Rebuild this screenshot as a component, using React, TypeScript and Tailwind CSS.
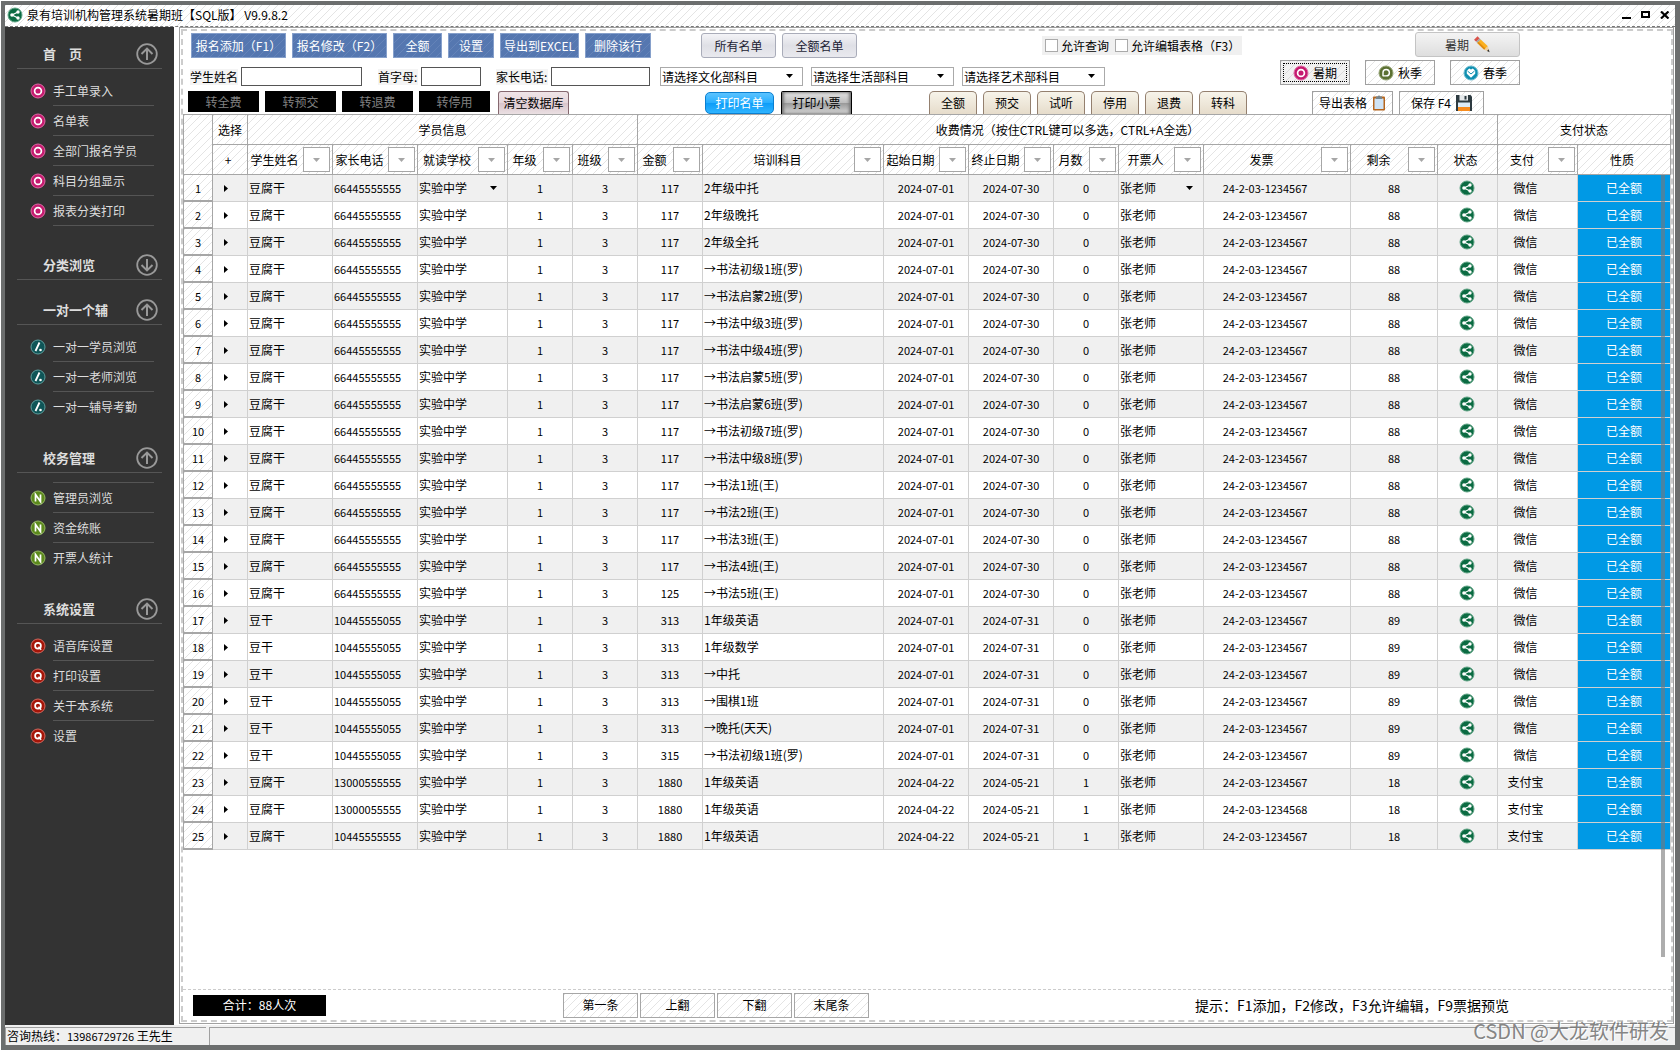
import React from 'react';

interface MenuSection {
    title: string;
    open: boolean;
    icon?: 'ring' | 'slash' | 'n' | 'q';
    spacing: string;
    listClass: string;
    items: string[];
}

interface Column {
    key: string;
    title: string;
    width: string;
    filter: boolean;
}

interface Student {
    name: string;
    phone: string;
    amount: number;
    subject: string;
    start: string;
    end: string;
    months: number;
    invoice: string;
    rest: number;
    pay: string;
}

const hatch = 'bg-[linear-gradient(135deg,#e4e4e4_9%,#fff_9%,#fff_50%,#e4e4e4_50%,#e4e4e4_59%,#fff_59%)] bg-[length:8px_8px]';
const darkHatch = 'bg-[linear-gradient(135deg,#dcdcdc_9%,#f2f2f2_9%,#f2f2f2_50%,#dcdcdc_50%,#dcdcdc_59%,#f2f2f2_59%)] bg-[length:8px_8px]';

const sections: MenuSection[] = [
    { title: '首　页', open: true, icon: 'ring', spacing: 'mt-[13px]', listClass: 'pt-[7px]', items: ['手工单录入', '名单表', '全部门报名学员', '科目分组显示', '报表分类打印'] },
    { title: '分类浏览', open: false, spacing: 'mt-[25px]', listClass: '', items: [] },
    { title: '一对一个辅', open: true, icon: 'slash', spacing: 'mt-[16px]', listClass: 'pt-[7px] [&>li:last-child]:border-transparent', items: ['一对一学员浏览', '一对一老师浏览', '一对一辅导考勤'] },
    { title: '校务管理', open: true, icon: 'n', spacing: 'mt-[22px]', listClass: 'mt-[9px] before:block before:h-px before:ml-[48px] before:mr-[20px] before:bg-[#555] [&>li:last-child]:border-transparent', items: ['管理员浏览', '资金统账', '开票人统计'] },
    { title: '系统设置', open: true, icon: 'q', spacing: 'mt-[22px]', listClass: 'pt-[7px] [&>li:last-child]:border-transparent', items: ['语音库设置', '打印设置', '关于本系统', '设置'] },
];

const columns: Column[] = [
    { key: 'mark', title: '+', width: 'w-[35px]', filter: false },
    { key: 'name', title: '学生姓名', width: 'w-[85px]', filter: true },
    { key: 'phone', title: '家长电话', width: 'w-[85px]', filter: true },
    { key: 'school', title: '就读学校', width: 'w-[90px]', filter: true },
    { key: 'grade', title: '年级', width: 'w-[65px]', filter: true },
    { key: 'class', title: '班级', width: 'w-[65px]', filter: true },
    { key: 'amount', title: '金额', width: 'w-[65px]', filter: true },
    { key: 'subject', title: '培训科目', width: 'w-[181px]', filter: true },
    { key: 'start', title: '起始日期', width: 'w-[85px]', filter: true },
    { key: 'end', title: '终止日期', width: 'w-[85px]', filter: true },
    { key: 'months', title: '月数', width: 'w-[65px]', filter: true },
    { key: 'issuer', title: '开票人', width: 'w-[85px]', filter: true },
    { key: 'invoice', title: '发票', width: 'w-[147px]', filter: true },
    { key: 'rest', title: '剩余', width: 'w-[87px]', filter: true },
    { key: 'status', title: '状态', width: 'w-[60px]', filter: false },
    { key: 'pay', title: '支付', width: 'w-[80px]', filter: true },
    { key: 'kind', title: '性质', width: 'w-[93px]', filter: false },
];

const julySubjects = [
    '2年级中托', '2年级晚托', '2年级全托', '→书法初级1班(罗)', '→书法启蒙2班(罗)', '→书法中级3班(罗)',
    '→书法中级4班(罗)', '→书法启蒙5班(罗)', '→书法启蒙6班(罗)', '→书法初级7班(罗)', '→书法中级8班(罗)',
    '→书法1班(王)', '→书法2班(王)', '→书法3班(王)', '→书法4班(王)', '→书法5班(王)',
];
const secondSubjects = ['1年级英语', '1年级数学', '→中托', '→围棋1班', '→晚托(天天)', '→书法初级1班(罗)'];

const students: Student[] = [
    ...julySubjects.map((subject, i) => ({
        name: '豆腐干', phone: '66445555555', amount: i === 15 ? 125 : 117, subject,
        start: '2024-07-01', end: '2024-07-30', months: 0, invoice: '24-2-03-1234567', rest: 88, pay: '微信',
    })),
    ...secondSubjects.map((subject, i) => ({
        name: '豆干', phone: '10445555055', amount: i === 5 ? 315 : 313, subject,
        start: '2024-07-01', end: '2024-07-31', months: 0, invoice: '24-2-03-1234567', rest: 89, pay: '微信',
    })),
    ...['13000555555', '13000055555', '10445555555'].map((phone, i) => ({
        name: '豆腐干', phone, amount: 1880, subject: '1年级英语',
        start: '2024-04-22', end: '2024-05-21', months: 1, invoice: i === 1 ? '24-2-03-1234568' : '24-2-03-1234567', rest: 18, pay: '支付宝',
    })),
];

const ShareIcon: React.FC = () => (
    <svg width="16" height="16" viewBox="0 0 16 16" className="shrink-0">
        <circle cx="8" cy="8" r="7" fill="#0b6b42" stroke="#5fa384" strokeWidth="1" />
        <path d="M11 5 5 8l6 3" fill="none" stroke="#fff" strokeWidth="1.2" />
        <circle cx="11" cy="5" r="1.7" fill="#fff" />
        <circle cx="5" cy="8" r="1.8" fill="#fff" />
        <circle cx="11" cy="11" r="1.7" fill="#fff" />
    </svg>
);

const RingIcon: React.FC = () => (
    <svg width="16" height="16" viewBox="0 0 16 16" className="shrink-0">
        <circle cx="8" cy="8" r="7" fill="#c51a6f" stroke="#dd6aa3" strokeWidth="1" />
        <circle cx="8" cy="8" r="3.4" fill="none" stroke="#fff" strokeWidth="1.7" />
    </svg>
);

const SlashIcon: React.FC = () => (
    <svg width="16" height="16" viewBox="0 0 16 16" className="shrink-0">
        <circle cx="8" cy="8" r="7" fill="#0f5557" stroke="#5b9c9c" strokeWidth="1" />
        <path d="M9.5 3.5 5.5 12" stroke="#fff" strokeWidth="1.8" />
        <circle cx="10.5" cy="11" r="1.3" fill="#fff" />
    </svg>
);

const NIcon: React.FC = () => (
    <svg width="16" height="16" viewBox="0 0 16 16" className="shrink-0">
        <circle cx="8" cy="8" r="7" fill="#5c8a1c" stroke="#96b765" strokeWidth="1" />
        <path d="M5.5 11.5v-7l5 7v-7" fill="none" stroke="#fff" strokeWidth="1.7" />
    </svg>
);

const QIcon: React.FC = () => (
    <svg width="16" height="16" viewBox="0 0 16 16" className="shrink-0">
        <circle cx="8" cy="8" r="7" fill="#a61508" stroke="#d0695f" strokeWidth="1" />
        <circle cx="8" cy="7.7" r="2.9" fill="none" stroke="#fff" strokeWidth="1.7" />
        <path d="m8.5 8.8 2.7 3" stroke="#fff" strokeWidth="1.5" />
    </svg>
);

const AutumnIcon: React.FC = () => (
    <svg width="16" height="16" viewBox="0 0 16 16" className="shrink-0">
        <circle cx="8" cy="8" r="7" fill="#5b7032" stroke="#96a576" strokeWidth="1" />
        <path d="M5 11.3V7.6a3.2 3.2 0 1 1 3.3 3.3H5" fill="none" stroke="#fff" strokeWidth="1.4" />
    </svg>
);

const SpringIcon: React.FC = () => (
    <svg width="16" height="16" viewBox="0 0 16 16" className="shrink-0">
        <circle cx="8" cy="8" r="7" fill="#0f8fb0" stroke="#6cbcd0" strokeWidth="1" />
        <path d="M8 4.6 9.8 3.6l2.4 2.2v3L8 12.8 3.800 8.800v-3l2.400-2.200z" fill="#fff" />
        <path d="m4.500 6 3.500 3L11.500 6" fill="none" stroke="#0f8fb0" strokeWidth="1" />
    </svg>
);

const PencilIcon: React.FC = () => (
    <svg width="17" height="17" viewBox="0 0 16 16" className="shrink-0">
        <path d="M1 3.500 4.300.3 6.300 2.300 3 5.500z" fill="#d9534a" />
        <path d="M3 5.500 6.300 2.300l1 1L4 6.500z" fill="#9aa3a8" />
        <path d="m4 6.500 3.300-3.200 6.700 6.300-3.400 3.400z" fill="#fbb01e" />
        <path d="m4 6.500 1.200-1.200 6.600 6.500-1.200 1.200z" fill="#e08a10" />
        <path d="M10.600 13 14 9.600l1.300 5.200z" fill="#f0cf9c" />
        <path d="m13.200 14 1.600-1.500.8 2.700z" fill="#333" />
    </svg>
);

const ClipboardIcon: React.FC = () => (
    <svg width="14" height="16" viewBox="0 0 14 16" className="shrink-0">
        <rect x="1" y="1.500" width="12" height="14" rx="1" fill="#b5651d" />
        <rect x="2.500" y="3.500" width="9" height="10.500" fill="#cfe3f5" />
        <path d="M4 1.500h1.600a1.500 1.500 0 0 1 2.800 0H10V4H4z" fill="#77858c" />
    </svg>
);

const FloppyIcon: React.FC = () => (
    <svg width="16" height="16" viewBox="0 0 16 16" className="shrink-0">
        <path d="M0 0h14.500L16 1.500V16H0z" fill="#2d3a40" />
        <rect x="3.500" y="0" width="8.500" height="5.500" fill="#e6eaec" />
        <rect x="8.500" y="1" width="2" height="3.500" fill="#2d3a40" />
        <rect x="2" y="7.500" width="12" height="4.500" fill="#dcecf8" />
        <rect x="2" y="12" width="12" height="4" fill="#f78c1e" />
    </svg>
);

const Arrow: React.FC<{ className?: string }> = ({ className }) => (
    <svg width="7" height="4" viewBox="0 0 7 4" className={className}>
        <path d="M0 0h7L3.500 4z" fill="currentColor" />
    </svg>
);

const menuIcons = { ring: <RingIcon />, slash: <SlashIcon />, n: <NIcon />, q: <QIcon /> };

const Sidebar: React.FC = () => (
    <nav className="w-[169px] shrink-0 bg-[#333] text-[#ddd]">
        {sections.map((section) => (
            <div key={section.title} className={section.spacing}>
                <button type="button" className="flex h-[28px] w-full items-center justify-between pb-px pl-[38px] pr-[16px] text-[13px] font-bold leading-4">
                    <span>{section.title}</span>
                    <svg width="22" height="22" viewBox="0 0 22 22" fill="none" stroke="#999" strokeWidth="2">
                        <circle cx="11" cy="11" r="9.800" strokeWidth="1.800" />
                        {section.open ? <path d="M11 17V6M5.500 11 11 5.600 16.500 11" /> : <path d="M11 5v11M5.500 11l5.500 5.400L16.500 11" />}
                    </svg>
                </button>
                <div className="ml-[12px] mr-[12px] h-px bg-[#555]" />
                <ul className={section.listClass}>
                    {section.items.map((item) => (
                        <li key={item} className="ml-[48px] mr-[20px] h-[30px] border-b border-[#555]">
                            <a href="#" className="-ml-[23px] flex h-full items-center gap-[7px] whitespace-nowrap">
                                {section.icon && menuIcons[section.icon]}
                                {item}
                            </a>
                        </li>
                    ))}
                </ul>
            </div>
        ))}
    </nav>
);

const SubjectSelect: React.FC<{ label: string }> = ({ label }) => (
    <div className="relative h-[19px] w-[143px]">
        <select aria-label={label} className="h-full w-full appearance-none border border-[#aaa] bg-white pl-px leading-[17px]">
            <option>{label}</option>
        </select>
        <Arrow className="pointer-events-none absolute right-[10px] top-[7px]" />
    </div>
);

const blueButton = 'h-[25px] border border-[#86a0cb] bg-[linear-gradient(135deg,#6483b8_9%,#5577b0_9%,#5577b0_50%,#6483b8_50%,#6483b8_59%,#5577b0_59%)] bg-[length:8px_8px] text-white';
const softButton = 'h-[25px] w-[75px] rounded-[3px] border border-[#a9acb9] bg-linear-to-b from-[#f4f4f7] via-[#dfe0e6] to-[#e9e9ee] text-[#1c1c34]';
const seasonButton = 'flex h-[25px] w-[70px] items-center justify-center gap-1 border border-[#a0a0a0]';
const textBox = 'h-[19px] border border-[#555] bg-white px-1';
const fieldLabel = 'bg-[#f4f4f4] leading-4';
const checkBox = 'size-[13px] shrink-0 appearance-none border border-[#aaa] bg-white checked:bg-[#555]';

const Toolbar: React.FC = () => (
    <div className="flex h-[83px] whitespace-nowrap">
        <div className="shrink-0 pt-[2px]">
            <div className="flex h-[25px] items-center gap-[6px] pl-[8px]">
                <button type="button" className={`${blueButton} w-[95px]`}>报名添加（F1）</button>
                <button type="button" className={`${blueButton} w-[95px]`}>报名修改（F2）</button>
                <button type="button" className={`${blueButton} w-[49px]`}>全额</button>
                <button type="button" className={`${blueButton} w-[46px]`}>设置</button>
                <button type="button" className={`${blueButton} w-[79px]`}>导出到EXCEL</button>
                <button type="button" className={`${blueButton} w-[66px]`}>删除该行</button>
                <div className="ml-[44px] flex gap-[6px]">
                    <button type="button" className={softButton}>所有名单</button>
                    <button type="button" className={softButton}>全额名单</button>
                </div>
                <div className="ml-[179px] flex h-[19px] w-[200px] items-center bg-[#f0f0f0] pl-[3px]">
                    <label className="flex w-[70px] items-center gap-[3px]">
                        <input type="checkbox" className={checkBox} />
                        允许查询
                    </label>
                    <label className="flex items-center gap-[3px]">
                        <input type="checkbox" className={checkBox} />
                        允许编辑表格（F3）
                    </label>
                </div>
            </div>

            <div className="mt-[9px] flex h-[19px] items-center pl-[7px]">
                <label htmlFor="name" className={`${fieldLabel} mr-[3px] w-[48px]`}>学生姓名</label>
                <input id="name" className={`${textBox} w-[121px]`} />
                <label htmlFor="initial" className={`${fieldLabel} ml-[16px] mr-[3px] w-[40px]`}>首字母:</label>
                <input id="initial" className={`${textBox} w-[60px]`} />
                <label htmlFor="phone" className={`${fieldLabel} ml-[15px] mr-[3px] w-[52px]`}>家长电话:</label>
                <input id="phone" className={`${textBox} w-[99px]`} />
                <div className="ml-[10px] flex gap-2">
                    <SubjectSelect label="请选择文化部科目" />
                    <SubjectSelect label="请选择生活部科目" />
                    <SubjectSelect label="请选择艺术部科目" />
                </div>
            </div>

            <div className="mt-[5px] flex h-[23px] items-start pl-[5px]">
                <div className="flex gap-[6px]">
                    {['转全费', '转预交', '转退费', '转停用'].map((label) => (
                        <button key={label} type="button" className="h-[21px] w-[71px] bg-black text-[#808080]">{label}</button>
                    ))}
                </div>
                <button type="button" className="ml-[8px] h-[23px] w-[71px] rounded-t-[3px] border border-b-0 border-[#85686f] bg-[linear-gradient(#efe4e7,#e6d6da_50%,#d9c5cb_50%,#eadfe2)]">清空数据库</button>
                <button type="button" className="ml-[136px] mt-px h-[22px] w-[69px] rounded-[5px] border border-[#0b7fd0] bg-[linear-gradient(#5cc3ff,#26aeff_50%,#0c9cf8_50%,#2fb4ff)] text-white">打印名单</button>
                <button type="button" className="ml-[7px] h-[23px] w-[71px] rounded-t-[2px] border border-b-0 border-black bg-[linear-gradient(#e4e4e4,#bcbcbc_50%,#989898_50%,#d8d8d8)] shadow-[inset_2px_0_3px_#777,inset_-2px_0_3px_#777]">打印小票</button>
                <div className="ml-[77px] flex gap-[6px]">
                    {['全额', '预交', '试听', '停用', '退费', '转科'].map((label) => (
                        <button key={label} type="button" className="h-[23px] w-[48px] rounded-t-[5px] border border-b-0 border-[#94806f] bg-linear-to-b from-[#f7f4ea] to-[#e6dccb]">{label}</button>
                    ))}
                </div>
            </div>
        </div>

        <div className="ml-auto mr-[151px] w-[240px] shrink-0 pt-px">
            <button type="button" className="ml-auto flex h-[25px] w-[105px] items-center justify-center gap-1 rounded-[3px] border border-[#c4c4c4] bg-linear-to-b from-[#f4f4f4] to-[#dedede] text-[#333]">
                暑期 <PencilIcon />
            </button>
            <div className="mt-[3px] flex justify-between">
                <button type="button" className={`${seasonButton} ${darkHatch} outline-1 -outline-offset-4 outline-dotted outline-black`}><RingIcon />暑期</button>
                <button type="button" className={`${seasonButton} ${hatch}`}><AutumnIcon />秋季</button>
                <button type="button" className={`${seasonButton} ${hatch}`}><SpringIcon />春季</button>
            </div>
            <div className="mt-[6px] flex gap-[6px] pl-[32px]">
                <button type="button" className={`flex h-[23px] w-[81px] items-center justify-center gap-[5px] border border-b-0 border-[#a0a0a0] ${hatch}`}>导出表格<ClipboardIcon /></button>
                <button type="button" className={`flex h-[23px] w-[85px] items-center justify-center gap-[5px] border border-b-0 border-[#a0a0a0] ${hatch}`}>保存 F4<FloppyIcon /></button>
            </div>
        </div>
    </div>
);

const headCell = `border-b border-r border-[#a6a6a6] p-0 font-normal ${hatch}`;

const StudentTable: React.FC = () => (
    <table className="w-full table-fixed border-separate border-spacing-0 whitespace-nowrap border-t border-[#a6a6a6]">
        <colgroup>
            <col className="w-[30px]" />
            {columns.map((column) => <col key={column.key} className={column.width} />)}
        </colgroup>
        <thead>
            <tr className="h-[30px]">
                <th rowSpan={2} aria-label="序号" className={`${headCell} border-l`} />
                <th className={headCell}>选择</th>
                <th colSpan={5} className={headCell}>学员信息</th>
                <th colSpan={9} className={headCell}>收费情况（按住CTRL键可以多选，CTRL+A全选）</th>
                <th colSpan={2} className={headCell}>支付状态</th>
            </tr>
            <tr className="h-[30px]">
                {columns.map((column) => (
                    <th key={column.key} className={headCell}>
                        <div className="flex items-center pr-[2px]">
                            <span className="flex-1 pr-[2px]">{column.title}</span>
                            {column.filter && (
                                <button type="button" aria-label={`筛选${column.title}`} className="flex h-[25px] w-[27px] shrink-0 items-center justify-center border border-[#a6a6a6] bg-white text-[#a6a6a6]">
                                    <Arrow />
                                </button>
                            )}
                        </div>
                    </th>
                ))}
            </tr>
        </thead>
        <tbody>
            {students.map((student, index) => (
                <tr key={index} className="h-[27px] text-center odd:bg-[#f0f0f0] even:bg-white [&>td]:border-b [&>td]:border-r [&>td]:border-[#d0d0d0] [&>td]:p-0">
                    <th className={`border-x border-b-2 border-[#a6a6a6] p-0 text-[11px] font-normal ${hatch}`}>{index + 1}</th>
                    <td>
                        <svg width="4" height="7" viewBox="0 0 4 7" className="ml-[11px]">
                            <path d="M0 0v7l4-3.500z" fill="#000" />
                        </svg>
                    </td>
                    <td className="text-left"><span className="pl-px">{student.name}</span></td>
                    <td className="text-left text-[11px]"><span className="pl-px">{student.phone}</span></td>
                    <td>
                        <div className="flex items-center justify-between pl-px pr-[10px]">
                            实验中学
                            {index === 0 && <Arrow />}
                        </div>
                    </td>
                    <td className="text-[11px]">1</td>
                    <td className="text-[11px]">3</td>
                    <td className="text-[11px]">{student.amount}</td>
                    <td className="text-left"><span className="pl-px">{student.subject}</span></td>
                    <td className="text-[11px]">{student.start}</td>
                    <td className="text-[11px]">{student.end}</td>
                    <td className="text-[11px]">{student.months}</td>
                    <td>
                        <div className="flex items-center justify-between pl-px pr-[10px]">
                            张老师
                            {index === 0 && <Arrow />}
                        </div>
                    </td>
                    <td className="text-[11px]"><span className="pr-[24px]">{student.invoice}</span></td>
                    <td className="text-[11px]">{student.rest}</td>
                    <td><div className="flex justify-center pr-px"><ShareIcon /></div></td>
                    <td><span className="pr-[24px]">{student.pay}</span></td>
                    <td className="bg-[#0099e5] text-white">已全额</td>
                </tr>
            ))}
        </tbody>
    </table>
);

const Footer: React.FC = () => (
    <div className="flex h-[31px] shrink-0 items-center border-t border-dashed border-[#ccc] pl-[10px]">
        <div className="h-[21px] w-[133px] bg-black text-center leading-[20px] text-white">合计：88人次</div>
        <div className="ml-[237px] flex gap-[2px]">
            {['第一条', '上翻', '下翻', '末尾条'].map((label) => (
                <button key={label} type="button" className={`h-[25px] w-[75px] border border-[#a6a6a6] ${hatch}`}>{label}</button>
            ))}
        </div>
        <p className="ml-auto mr-[162px] text-[14px]">提示：F1添加，F2修改，F3允许编辑，F9票据预览</p>
    </div>
);

const App: React.FC = () => {
    return (
        <div className="flex min-h-screen flex-col bg-white pl-px pt-px font-['Noto_Sans_CJK_SC',sans-serif] text-[12px] leading-4 text-black">
            <div className="relative flex flex-1 flex-col border-4 border-b-[5px] border-r-[5px] border-[#6c6e6e]">
                <header className={`flex h-[22px] items-center border-b border-dashed border-[#777] pb-px pl-[2px] ${hatch}`}>
                    <ShareIcon />
                    <h1 className="ml-[4px]">泉有培训机构管理系统暑期班【SQL版】 V9.9.8.2</h1>
                    <div className="ml-auto flex gap-[9px] pr-[5px]">
                        <button type="button" aria-label="最小化">
                            <svg width="10" height="8" viewBox="0 0 10 8"><path d="M0 7h9" stroke="#000" strokeWidth="2" /></svg>
                        </button>
                        <button type="button" aria-label="最大化">
                            <svg width="10" height="8" viewBox="0 0 10 8"><path d="M1 1h7v5H1z" fill="none" stroke="#000" strokeWidth="2" /></svg>
                        </button>
                        <button type="button" aria-label="关闭">
                            <svg width="10" height="8" viewBox="0 0 10 8"><path d="m1 .5 7.500 7M8.500.5 1 7.500" stroke="#000" strokeWidth="2.200" /></svg>
                        </button>
                    </div>
                </header>

                <div className="flex flex-1">
                    <Sidebar />
                    <main className="mb-px ml-[5px] mr-px flex min-w-0 flex-1 border border-[#a0a0a0] py-px pl-px">
                        <div className="flex min-w-0 flex-1 flex-col border-2 border-dashed border-[#ccc]">
                            <Toolbar />
                            <div className="relative flex-1">
                                <StudentTable />
                                <div className="absolute bottom-[32px] right-[6px] top-[61px] w-[4px] bg-[#777]/60" />
                            </div>
                            <Footer />
                        </div>
                    </main>
                </div>

                <footer className="flex h-[20px] gap-[3px] bg-[#f0f0f0] pt-[2px]">
                    <div className="w-[201px] border-l border-t border-[#a0a0a0] pl-px leading-4">
                        咨询热线：<span className="text-[11px]">13986729726</span> 王先生
                    </div>
                    <div className="flex-1 border-l border-t border-[#a0a0a0]" />
                </footer>

                <div className="pointer-events-none absolute bottom-[2px] right-[6px] text-[20px] leading-6 text-[#666]/80 [text-shadow:1px_1px_1px_#fff]">CSDN @大龙软件研发</div>
            </div>
        </div>
    );
};

export default App;
